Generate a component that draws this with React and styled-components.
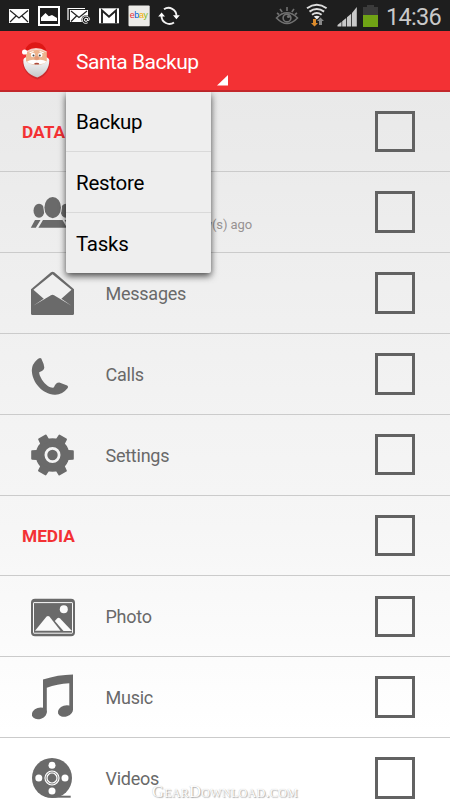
import React from "react";
import styled, { createGlobalStyle } from "styled-components";

const Global = createGlobalStyle`
  * { box-sizing: border-box; }
  body { margin: 0; overflow: hidden; font-family: Roboto, sans-serif; background: #fff; }
`;
const Screen = styled.div`
  position: relative;
  width: 450px;
  height: 800px;
  overflow: hidden;
  display: flex;
  flex-direction: column;
  background: #fff;
`;
const StatusBar = styled.header`
  flex: none;
  height: 31px;
  display: flex;
  justify-content: space-between;
  background: #1e1e1e;
`;
const StatusDrawing = styled.svg`
  display: block;
  flex: none;
`;
const StatusRight = styled.div`
  display: flex;
`;
const Clock = styled.time`
  width: 66px;
  padding-left: 2px;
  line-height: 35px;
  font-size: 23.5px;
  letter-spacing: -0.7px;
  white-space: nowrap;
  color: #c9c9c9;
`;
const ActionBar = styled.div`
  flex: none;
  display: flex;
  align-items: center;
  height: 60.5px;
  padding-left: 21px;
  background: #f33134;
  border-bottom: 2px solid #c3272b;
`;
const Title = styled.h1`
  margin: 4px 0 0 25px;
  font-size: 21px;
  font-weight: 400;
  letter-spacing: -0.5px;
  line-height: 28px;
  width: 141px;
  white-space: nowrap;
  color: #fff;
`;
const Spinner = styled.svg`
  align-self: flex-end;
  margin: 0 0 4px -0.5px;
`;
const List = styled.main`
  flex: 1;
  background: linear-gradient(#e9e9e9, #eeeeee 22%, #f6f6f6 60%, #fff 88%);
`;
const Row = styled.section`
  height: 80.83px;
  display: flex;
  align-items: center;
  padding: 0 35px 0 ${(p) => (p.$heading ? 22 : 28)}px;
  border-bottom: 1.5px solid #cbcbcb;
`;
const RowIcon = styled.svg`
  flex: none;
  width: 50px;
  height: 50px;
  margin-right: 27.5px;
  fill: #6a6a6a;
`;
const Heading = styled.h2`
  flex: 1;
  margin: 1px 0 0;
  font-size: 17.3px;
  font-weight: 700;
  color: #f33134;
`;
const Labels = styled.div`
  flex: 1;
  display: flex;
  flex-direction: column;
  padding-top: 2px;
`;
const Label = styled.span`
  font-size: 18px;
  line-height: 22px;
  letter-spacing: -0.25px;
  color: #696969;
`;
const Detail = styled.span`
  margin-top: 1px;
  width: 146.5px;
  font-size: 13px;
  line-height: 17px;
  letter-spacing: -0.1px;
  text-align: right;
  color: #979292;
`;
const Check = styled.span`
  flex: none;
  width: 40.5px;
  height: 41.5px;
  border: 3px solid #626262;
`;
const Menu = styled.nav`
  position: absolute;
  left: 66px;
  top: 91.5px;
  width: 145px;
  height: 181px;
  background: #eee;
  border-radius: 0 0 2px 2px;
  box-shadow: 0 3px 7px rgba(0, 0, 0, 0.7);
  clip-path: inset(0 -12px -14px -12px);
`;
const MenuItem = styled.div`
  height: 60.7px;
  padding: 1px 0 0 10px;
  display: flex;
  align-items: center;
  font-size: 20.5px;
  letter-spacing: -0.25px;
  color: #000;
  border-bottom: ${(p) => (p.$last ? "0" : "1px solid #d9d9d9")};
`;
const Watermark = styled.div`
  position: absolute;
  left: 152px;
  top: 783px;
  font-family: "Liberation Serif", serif;
  font-size: 16.5px;
  line-height: 18px;
  letter-spacing: 0.3px;
  font-variant: small-caps;
  white-space: nowrap;
  color: #fff;
  text-shadow: 1px 1px 1px #aaa, 0 0 1px #bbb;
`;

const icons = {
  contacts: (
    <>
      <ellipse cx="39" cy="-1.2" rx="5.5" ry="7" />
      <ellipse cx="66" cy="-1.2" rx="5.5" ry="7" />
      <path d="M35 8h5.5l-4.7 7.7h-5zM64.5 8h5.5l4.5 7.7h-5z" />
      <ellipse cx="52.7" cy="-4.3" rx="9.3" ry="11.7" fill="#eee" />
      <ellipse cx="52.7" cy="-4.4" rx="8.3" ry="10.6" />
      <path d="M43 8h19.5l4.5 7.7H38.4z" />
    </>
  ),
  messages: (
    <>
      <path d="M31-3.7L51-20.8q1.6-1 3.2 0L74-3.7V20.5q0 1.5-1.5 1.5h-40q-1.5 0-1.5-1.5z" />
      <path d="M33.4-3.2L52.5-18.8 71.5-3.2 61.4 5.8 71.5 12.8 55.7 3.2q-3.2-3-6.4 0L33.2 12.8 43.7 5.8z" fill="#f0f0f0" />
    </>
  ),
  calls: (
    <path d="M37-14.2Q39.6-16.8 41.3-15.5Q44-10 44.3-6.4Q44.2-3.2 39.2-1.8C39 3 47 14.8 53.8 13.6Q55.5 8.5 59.3 8.4L67.2 11.4Q68.8 12.5 67.7 14Q62 21.2 54.5 20.7C42.5 20 32 8.3 31.8-3.8Q31.9-9.6 37-14.2z" />
  ),
  settings: (
    <>
      <circle cx="52.5" cy="0" r="16.8" />
      {[0, 60, 120, 180, 240, 300].map((a) => (
        <path key={a} transform={`rotate(${a} 52.5 0)`} d="M66-6.2L68.5-5L73-4.7Q73.8-4.5 73.8-3.8V3.8Q73.8 4.6 73 4.8L68.5 5L66 6.2z" />
      ))}
      <circle cx="52.5" cy="0" r="6.6" fill="none" stroke="#f4f4f4" strokeWidth="2.8" />
    </>
  ),
  photo: (
    <>
      <rect x="31" y="-17.2" width="44" height="37.4" rx="4" />
      <rect x="33.5" y="-13.4" width="39" height="30.6" rx="0.5" fill="none" stroke="#fafafa" strokeWidth="1" />
      <path d="M35 14.7L46.6.6q1.4-1 2.8 0L60.5 14.7z" fill="#fafafa" />
      <path d="M54.8 5L57.3 2.2q1.5-.9 2.8.3L72 15H63.5z" fill="#fafafa" />
      <circle cx="63.8" cy="-6.7" r="4" fill="#fafafa" />
    </>
  ),
  music: (
    <>
      <path d="M43-17.5Q58-22.3 73-22.5V13H69.3V-13.7Q57-12.8 46.8-9.2V15.5H43z" />
      <ellipse cx="39.3" cy="16.3" rx="7.7" ry="5.6" transform="rotate(-18 39.3 16.3)" />
      <ellipse cx="65.4" cy="14" rx="7.7" ry="5.6" transform="rotate(-18 65.4 14)" />
    </>
  ),
  videos: (
    <>
      <circle cx="52" cy="0" r="20" />
      <path d="M52 17.7h18.7v2H52z" />
      {[[52, -12.7], [52, 13], [38.8, 0], [65, 0]].map(([x, y]) => (
        <circle key={`${x}${y}`} cx={x} cy={y} r="3.5" fill="#fff" />
      ))}
      <circle cx="52" cy="0" r="6" fill="none" stroke="#fff" strokeWidth="3.2" />
      <circle cx="52" cy="0" r="6" fill="none" stroke="#777" strokeWidth="0.9" />
    </>
  ),
};

const rows = [
  { heading: "DATA" },
  { label: "Contacts", icon: "contacts", detail: "3 day(s) ago" },
  { label: "Messages", icon: "messages" },
  { label: "Calls", icon: "calls" },
  { label: "Settings", icon: "settings" },
  { heading: "MEDIA" },
  { label: "Photo", icon: "photo" },
  { label: "Music", icon: "music" },
  { label: "Videos", icon: "videos" },
];

function Notifications() {
  return (
    <StatusDrawing width="190" height="31" viewBox="0 0 190 31">
      <rect x="9" y="9" width="20" height="14" fill="#fff" />
      <path d="M10 10.5l9 7.5 9-7.5M10 22l6-6M28 22l-6-6" stroke="#222" strokeWidth="1.2" fill="none" />
      <rect x="39" y="7" width="20" height="18" fill="none" stroke="#fff" strokeWidth="2" />
      <path d="M41 19V17.5L45.5 13l3.3 3.3L52 15l5 3v3H41z" fill="#fff" />
      <path d="M68 20V8.5h17" fill="none" stroke="#fff" strokeWidth="1.2" />
      <path d="M70 10h18v7l-5 5H70z" fill="#fff" />
      <path d="M71 11l8 6.5 8-6.5M71 21.5l5.5-5.5" fill="none" stroke="#222" strokeWidth="1.2" />
      <circle cx="86" cy="19.8" r="4.6" fill="#1e1e1e" />
      <circle cx="86" cy="19.8" r="1.6" fill="none" stroke="#fff" />
      <path d="M87.7 18v2.3q1.7.7 1.8-1c-.4-4.6-7.2-4.2-7.2.5 0 3.6 3.7 4.3 5.5 2.9" fill="none" stroke="#fff" strokeWidth=".9" />
      <rect x="99" y="8.3" width="20" height="15" fill="#fff" />
      <path d="M102 23.3V10.5l7 6.3 7-6.3v12.8" fill="none" stroke="#222" strokeWidth="1.9" />
      <rect x="128.5" y="5.5" width="21.2" height="20.7" rx="1" fill="#ecebe8" />
      <text x="129.8" y="18.2" fontFamily="Liberation Sans, sans-serif" fontSize="9" letterSpacing="-.45">
        <tspan fill="#e53238">e</tspan><tspan fill="#0064d2">b</tspan><tspan fill="#f5af02">a</tspan><tspan fill="#86b817">y</tspan>
      </text>
      <g fill="none" stroke="#f2f2f2" strokeWidth="1.9">
        <path d="M164 9.3a8 8 0 0 1 12.5 6.5" />
        <path d="M174 22.5a8 8 0 0 1-12.5-6.5" />
      </g>
      <path d="M173 15.2h6.8l-3.4 4zM158.2 16.6h6.8l-3.4-4z" fill="#fff" />
    </StatusDrawing>
  );
}

function Signals() {
  return (
    <StatusDrawing width="110" height="31" viewBox="275 0 110 31">
      <g fill="none" stroke="#717171" strokeWidth="1.6">
        <path d="M277.5 18Q288 7.5 298.5 18Q288 29 277.5 18z" />
        <path d="M288 7v4M281 9l2.2 3M295 9l-2.2 3M278 13l2 1.5M298 13l-2 1.5" />
        <circle cx="288" cy="18" r="3.9" />
      </g>
      <circle cx="289.5" cy="16.5" r="1.6" fill="#717171" />
      <g fill="none" stroke="#ddd" strokeWidth="2">
        <path d="M308 8.3q9.8-7 19.6 0M310.5 11.6q7.3-5.2 14.6 0M313 14.8q4.8-3.4 9.6 0" />
      </g>
      <path d="M314.8 16.5q3-1.6 6 0l-3 3z" fill="#eee" />
      <path d="M314 19h3v4h2l-3.5 3.5-3.5-3.5h2z" fill="#dc8b2c" />
      <path d="M320 25v-4h-2l3.5-3.5 3.5 3.5h-2v4z" fill="#888" />
      <path d="M338.5 26.5V25l4-3.3v4.8zM343.2 26.5v-5.3l4-3.3v8.6zM348 26.5v-9.2l4.2-3.5v12.7zM353 26.5V13l4.8-6v19.5z" fill="#c9c9c9" />
      <path d="M364 7h4V5h7v2h4v8h-15z" fill="#3b3b3b" />
      <path d="M364 15h15v12h-15z" fill="#70a315" />
    </StatusDrawing>
  );
}

function Santa() {
  return (
    <svg width="30" height="40" viewBox="21 41 30 40">
      <defs>
        <linearGradient id="beard" x2="0" y2="1">
          <stop stopColor="#fff" />
          <stop offset="1" stopColor="#c5c8c9" />
        </linearGradient>
      </defs>
      <path d="M22.5 62.5Q24 57 36.5 59 48 57 50 63C50 71 46 77 37.5 80.5 28 78 22.5 70 22.5 62.5z" fill="#000" opacity=".15" />
      <path d="M23.3 61Q24 56 36.5 58 48 56 49.3 61C49.5 69 45 75.5 37.3 78.5 28 76 23 69 23.3 61z" fill="url(#beard)" />
      <path d="M26 52.5Q36 48 46.8 52.5V62q-4 5-10 3-6 2-10.8-3z" fill="#edb38d" />
      <path d="M24.5 52Q27.5 43.2 35.5 43.2 44.5 43.6 46.8 52.8Q36 46.5 26.5 54z" fill="#de1715" />
      <path d="M27 51.7Q36 46.3 46.6 52.2L46.4 53.3Q36.5 48.8 27 53.6z" fill="#fbe8df" opacity=".85" />
      <circle cx="24.6" cy="53" r="2.6" fill="#fff" />
      <circle cx="33" cy="56" r="2.2" fill="#fff" />
      <circle cx="40.3" cy="56" r="2.2" fill="#fff" />
      <circle cx="33.5" cy="56.4" r="1" fill="#43494a" />
      <circle cx="39.8" cy="56.4" r="1" fill="#43494a" />
      <path d="M29.6 53.8l4-1.3M39.6 52.5l4 1.3" stroke="#fff" strokeWidth="1.2" />
      <ellipse cx="36.7" cy="59" rx="2.4" ry="1.9" fill="#e39a78" />
      <path d="M27 62.5Q31.5 59.8 36.7 61.3 42 59.8 46.5 62.5 43 66.5 36.7 64.2 30 66.5 27 62.5z" fill="#fff" />
      <ellipse cx="36.7" cy="64.7" rx="2.5" ry=".9" fill="#ac4a39" />
    </svg>
  );
}

export default function App() {
  return (
    <Screen>
      <Global />
      <StatusBar>
        <Notifications />
        <StatusRight>
          <Signals />
          <Clock>14:36</Clock>
        </StatusRight>
      </StatusBar>
      <ActionBar>
        <Santa />
        <Title>Santa Backup</Title>
        <Spinner width="12" height="11" viewBox="0 0 12 11">
          <path d="M11 0v10.5H0z" fill="#fff" />
        </Spinner>
      </ActionBar>
      <List>
        {rows.map((r) => (
          <Row key={r.heading || r.label} $heading={!!r.heading}>
            {r.heading ? (
              <Heading>{r.heading}</Heading>
            ) : (
              <>
                <RowIcon viewBox="28 -25 50 50">{icons[r.icon]}</RowIcon>
                <Labels>
                  <Label>{r.label}</Label>
                  {r.detail && <Detail>{r.detail}</Detail>}
                </Labels>
              </>
            )}
            <Check role="checkbox" aria-checked="false" />
          </Row>
        ))}
      </List>
      <Menu>
        <MenuItem>Backup</MenuItem>
        <MenuItem>Restore</MenuItem>
        <MenuItem $last>Tasks</MenuItem>
      </Menu>
      <Watermark>GearDownload.com</Watermark>
    </Screen>
  );
}
